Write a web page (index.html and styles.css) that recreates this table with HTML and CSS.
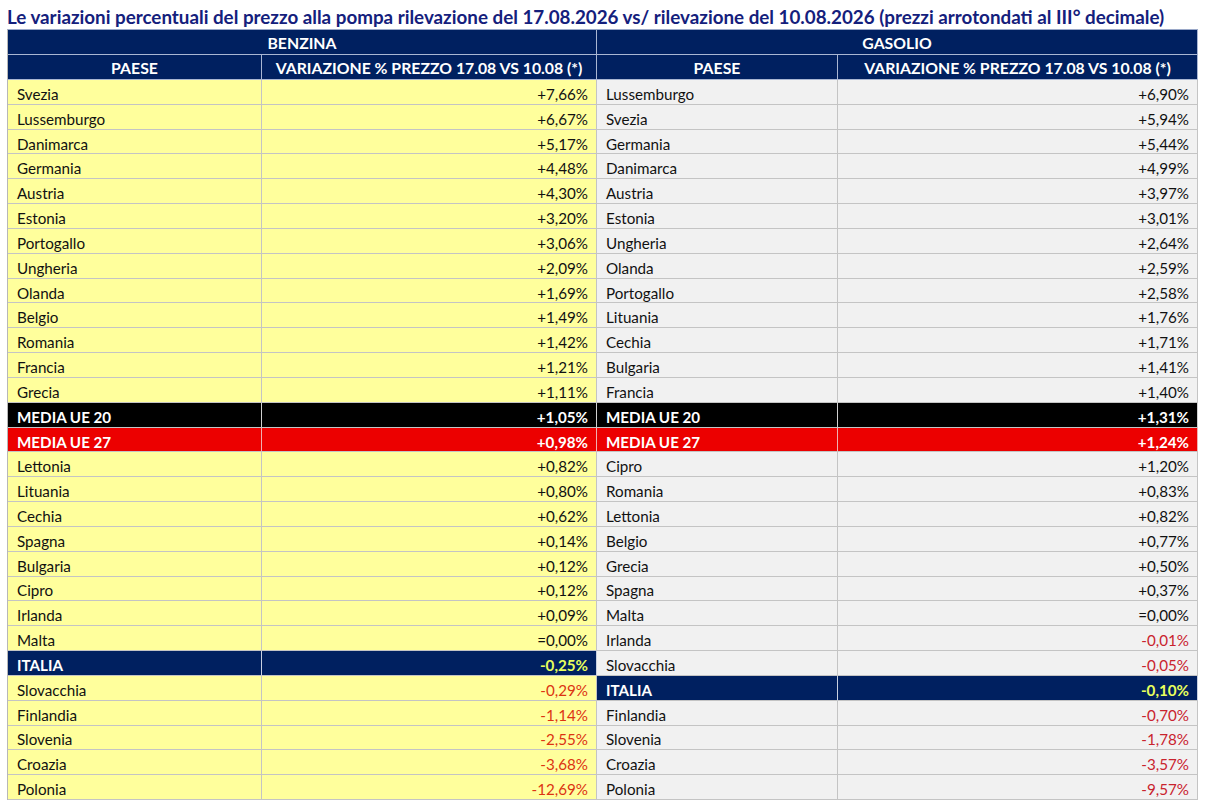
FILE: index.html
```html
<!DOCTYPE html>
<html lang="it">
<head>
<meta charset="utf-8">
<title>Variazioni prezzo alla pompa</title>
<link rel="stylesheet" href="styles.css">
</head>
<body>
<h1 class="title">Le variazioni percentuali del prezzo alla pompa rilevazione del 17.08.2026 vs/ rilevazione del 10.08.2026 (prezzi arrotondati al III° decimale)</h1>
<div class="sheet">
  <div class="row head">
    <div class="c span">BENZINA</div>
    <div class="c span">GASOLIO</div>
  </div>
  <div class="row head">
    <div class="c">PAESE</div>
    <div class="c">VARIAZIONE % PREZZO 17.08 VS 10.08 (*)</div>
    <div class="c">PAESE</div>
    <div class="c">VARIAZIONE % PREZZO 17.08 VS 10.08 (*)</div>
  </div>

  <div class="row"><div class="c n y">Svezia</div><div class="c v y">+7,66%</div><div class="c n g">Lussemburgo</div><div class="c v g">+6,90%</div></div>
  <div class="row"><div class="c n y">Lussemburgo</div><div class="c v y">+6,67%</div><div class="c n g">Svezia</div><div class="c v g">+5,94%</div></div>
  <div class="row"><div class="c n y">Danimarca</div><div class="c v y">+5,17%</div><div class="c n g">Germania</div><div class="c v g">+5,44%</div></div>
  <div class="row"><div class="c n y">Germania</div><div class="c v y">+4,48%</div><div class="c n g">Danimarca</div><div class="c v g">+4,99%</div></div>
  <div class="row"><div class="c n y">Austria</div><div class="c v y">+4,30%</div><div class="c n g">Austria</div><div class="c v g">+3,97%</div></div>
  <div class="row"><div class="c n y">Estonia</div><div class="c v y">+3,20%</div><div class="c n g">Estonia</div><div class="c v g">+3,01%</div></div>
  <div class="row"><div class="c n y">Portogallo</div><div class="c v y">+3,06%</div><div class="c n g">Ungheria</div><div class="c v g">+2,64%</div></div>
  <div class="row"><div class="c n y">Ungheria</div><div class="c v y">+2,09%</div><div class="c n g">Olanda</div><div class="c v g">+2,59%</div></div>
  <div class="row"><div class="c n y">Olanda</div><div class="c v y">+1,69%</div><div class="c n g">Portogallo</div><div class="c v g">+2,58%</div></div>
  <div class="row"><div class="c n y">Belgio</div><div class="c v y">+1,49%</div><div class="c n g">Lituania</div><div class="c v g">+1,76%</div></div>
  <div class="row"><div class="c n y">Romania</div><div class="c v y">+1,42%</div><div class="c n g">Cechia</div><div class="c v g">+1,71%</div></div>
  <div class="row"><div class="c n y">Francia</div><div class="c v y">+1,21%</div><div class="c n g">Bulgaria</div><div class="c v g">+1,41%</div></div>
  <div class="row"><div class="c n y">Grecia</div><div class="c v y">+1,11%</div><div class="c n g">Francia</div><div class="c v g">+1,40%</div></div>
  <div class="row"><div class="c n blk">MEDIA UE 20</div><div class="c v blk">+1,05%</div><div class="c n blk">MEDIA UE 20</div><div class="c v blk">+1,31%</div></div>
  <div class="row"><div class="c n red">MEDIA UE 27</div><div class="c v red">+0,98%</div><div class="c n red">MEDIA UE 27</div><div class="c v red">+1,24%</div></div>
  <div class="row"><div class="c n y">Lettonia</div><div class="c v y">+0,82%</div><div class="c n g">Cipro</div><div class="c v g">+1,20%</div></div>
  <div class="row"><div class="c n y">Lituania</div><div class="c v y">+0,80%</div><div class="c n g">Romania</div><div class="c v g">+0,83%</div></div>
  <div class="row"><div class="c n y">Cechia</div><div class="c v y">+0,62%</div><div class="c n g">Lettonia</div><div class="c v g">+0,82%</div></div>
  <div class="row"><div class="c n y">Spagna</div><div class="c v y">+0,14%</div><div class="c n g">Belgio</div><div class="c v g">+0,77%</div></div>
  <div class="row"><div class="c n y">Bulgaria</div><div class="c v y">+0,12%</div><div class="c n g">Grecia</div><div class="c v g">+0,50%</div></div>
  <div class="row"><div class="c n y">Cipro</div><div class="c v y">+0,12%</div><div class="c n g">Spagna</div><div class="c v g">+0,37%</div></div>
  <div class="row"><div class="c n y">Irlanda</div><div class="c v y">+0,09%</div><div class="c n g">Malta</div><div class="c v g">=0,00%</div></div>
  <div class="row"><div class="c n y">Malta</div><div class="c v y">=0,00%</div><div class="c n g">Irlanda</div><div class="c v g neg">-0,01%</div></div>
  <div class="row"><div class="c n it">ITALIA</div><div class="c v it">-0,25%</div><div class="c n g">Slovacchia</div><div class="c v g neg">-0,05%</div></div>
  <div class="row"><div class="c n y">Slovacchia</div><div class="c v y neg">-0,29%</div><div class="c n it">ITALIA</div><div class="c v it">-0,10%</div></div>
  <div class="row"><div class="c n y">Finlandia</div><div class="c v y neg">-1,14%</div><div class="c n g">Finlandia</div><div class="c v g neg">-0,70%</div></div>
  <div class="row"><div class="c n y">Slovenia</div><div class="c v y neg">-2,55%</div><div class="c n g">Slovenia</div><div class="c v g neg">-1,78%</div></div>
  <div class="row"><div class="c n y">Croazia</div><div class="c v y neg">-3,68%</div><div class="c n g">Croazia</div><div class="c v g neg">-3,57%</div></div>
  <div class="row"><div class="c n y">Polonia</div><div class="c v y neg">-12,69%</div><div class="c n g">Polonia</div><div class="c v g neg">-9,57%</div></div>
</div>
</body>
</html>
```

FILE: styles.css
```css
html, body {
  margin: 0;
  padding: 0;
  background: #ffffff;
}

body {
  font-family: Lato, "Open Sans", "Liberation Sans", sans-serif;
  padding: 0 0 0 7px;
}

.title {
  margin: 0;
  height: 29px;
  line-height: 34px;
  font-size: 18.8px;
  font-weight: 700;
  color: #14207c;
  white-space: nowrap;
}

.sheet {
  width: 1190px;
  border-left: 1px solid #b7b7b7;
  border-top: 1px solid #9aa8c8;
}

.row {
  display: grid;
  grid-template-columns: 254px 335px 241px 360px;
  height: 24.83px;
}

.row.head {
  height: 25px;
}

.head .c {
  background: #002060;
  color: #ffffff;
  font-size: 15.8px;
  font-weight: 700;
  text-align: center;
  justify-content: center;
  padding-top: 0;
  border-right: 1px solid #a9b6d3;
  border-bottom: 1px solid #a9b6d3;
}

.head .span {
  grid-column: span 2;
}

.c {
  display: flex;
  align-items: center;
  padding-top: 4px;
  font-size: 15.2px;
  color: #111111;
  border-right: 1px solid #c4c4c4;
  border-bottom: 1px solid #c4c4c4;
  box-sizing: border-box;
  white-space: nowrap;
  overflow: hidden;
}

.n {
  padding-left: 9px;
}

.v {
  justify-content: flex-end;
  padding-right: 8px;
}

.y {
  background: #ffff9c;
}

.g {
  background: #f1f1f1;
}

.neg.y {
  color: #dc3412;
}

.neg.g {
  color: #c9232e;
}

.blk {
  background: #000000;
  color: #ffffff;
  font-weight: 700;
  border-right-color: #d0d0d0;
}

.red {
  background: #ec0000;
  color: #ffffff;
  font-weight: 700;
  border-right-color: #f0b0b0;
}

.it {
  background: #002060;
  color: #ffffff;
  font-weight: 700;
  border-right-color: #c8d0e0;
}

.v.it {
  color: #e8ff5c;
}
```
